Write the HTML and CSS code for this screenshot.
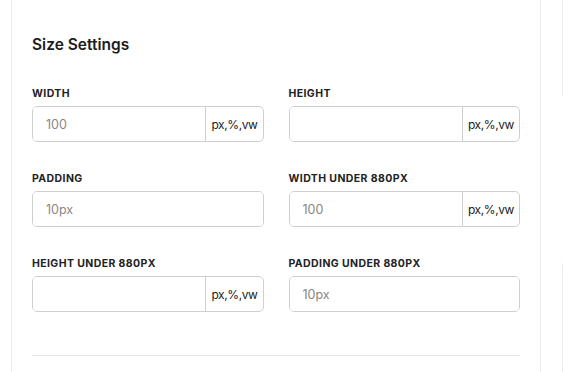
FILE: index.html
```html
<!DOCTYPE html>
<html lang="en">
<head>
    <meta charset="UTF-8">
    <meta name="viewport" content="width=device-width, initial-scale=1.0">
    <title>Size Settings</title>
    <link rel="stylesheet" href="styles.css">
</head>
<body>

    <div class="page">
        <!-- Settings card -->
        <div class="card">
            <h2>Size Settings</h2>

            <div class="field-grid">
                <div class="field">
                    <label for="width">Width</label>
                    <div class="input-group">
                        <input type="text" id="width" placeholder="100">
                        <span class="unit">px,%,vw</span>
                    </div>
                </div>

                <div class="field">
                    <label for="height">Height</label>
                    <div class="input-group">
                        <input type="text" id="height">
                        <span class="unit">px,%,vw</span>
                    </div>
                </div>

                <div class="field">
                    <label for="padding">Padding</label>
                    <div class="input-group">
                        <input type="text" id="padding" placeholder="10px">
                    </div>
                </div>

                <div class="field">
                    <label for="widthMobile">Width under 880px</label>
                    <div class="input-group">
                        <input type="text" id="widthMobile" placeholder="100">
                        <span class="unit">px,%,vw</span>
                    </div>
                </div>

                <div class="field">
                    <label for="heightMobile">Height under 880px</label>
                    <div class="input-group">
                        <input type="text" id="heightMobile">
                        <span class="unit">px,%,vw</span>
                    </div>
                </div>

                <div class="field">
                    <label for="paddingMobile">Padding under 880px</label>
                    <div class="input-group">
                        <input type="text" id="paddingMobile" placeholder="10px">
                    </div>
                </div>
            </div>

            <hr class="divider">
        </div>

        <!-- Side column -->
        <div class="side">
            <div class="side-card top"></div>
            <div class="side-card"></div>
        </div>
    </div>

</body>
</html>
```

FILE: styles.css
```css
body {
    font-family: 'Inter', 'Noto Sans', sans-serif;
    background: #fff;
    color: #222;
    margin: 0;
    overflow: hidden;
}

.page {
    display: flex;
    align-items: flex-start;
    gap: 21px;
    padding-left: 11px;
}

.card {
    flex: 0 0 530px;
    box-sizing: border-box;
    border: 1px solid #ececec;
    border-top: none;
    border-radius: 0 0 8px 8px;
    padding: 33px 20px 60px;
}

h2 {
    font-size: 15.5px;
    font-weight: 600;
    line-height: 24px;
    color: #1c1c1c;
    margin: 0 0 30px;
}

.field-grid {
    display: grid;
    grid-template-columns: minmax(0, 1fr) minmax(0, 1fr);
    column-gap: 25px;
    row-gap: 30px;
}

label {
    display: block;
    font-size: 10.5px;
    font-weight: 700;
    line-height: 14px;
    letter-spacing: 0.4px;
    text-transform: uppercase;
    color: #222;
    margin-bottom: 5px;
}

.input-group {
    display: flex;
    height: 36px;
    box-sizing: border-box;
    border: 1px solid #cfcfcf;
    border-radius: 5px;
    overflow: hidden;
}

.input-group input {
    flex: 1;
    width: 0;
    min-width: 0;
    border: none;
    outline: none;
    padding: 0 13px;
    font-family: inherit;
    font-size: 12.5px;
    color: #333;
    background: #fff;
}

.input-group input::placeholder {
    color: #8c8580;
}

.unit {
    display: flex;
    align-items: center;
    padding: 0 5px;
    border-left: 1px solid #cfcfcf;
    font-size: 12px;
    letter-spacing: -0.4px;
    color: #1a1a1a;
    white-space: nowrap;
}

.divider {
    border: none;
    border-top: 1px solid #e6e6e6;
    margin: 43px 0 0;
}

/* Right hand column */
.side {
    flex: 0 0 200px;
}

.side-card {
    height: 200px;
    border: 1px solid #ececec;
    border-radius: 8px;
}

.side-card.top {
    height: 100px;
    border-top: none;
    border-radius: 0 0 8px 8px;
    margin-bottom: 157px;
}
```
